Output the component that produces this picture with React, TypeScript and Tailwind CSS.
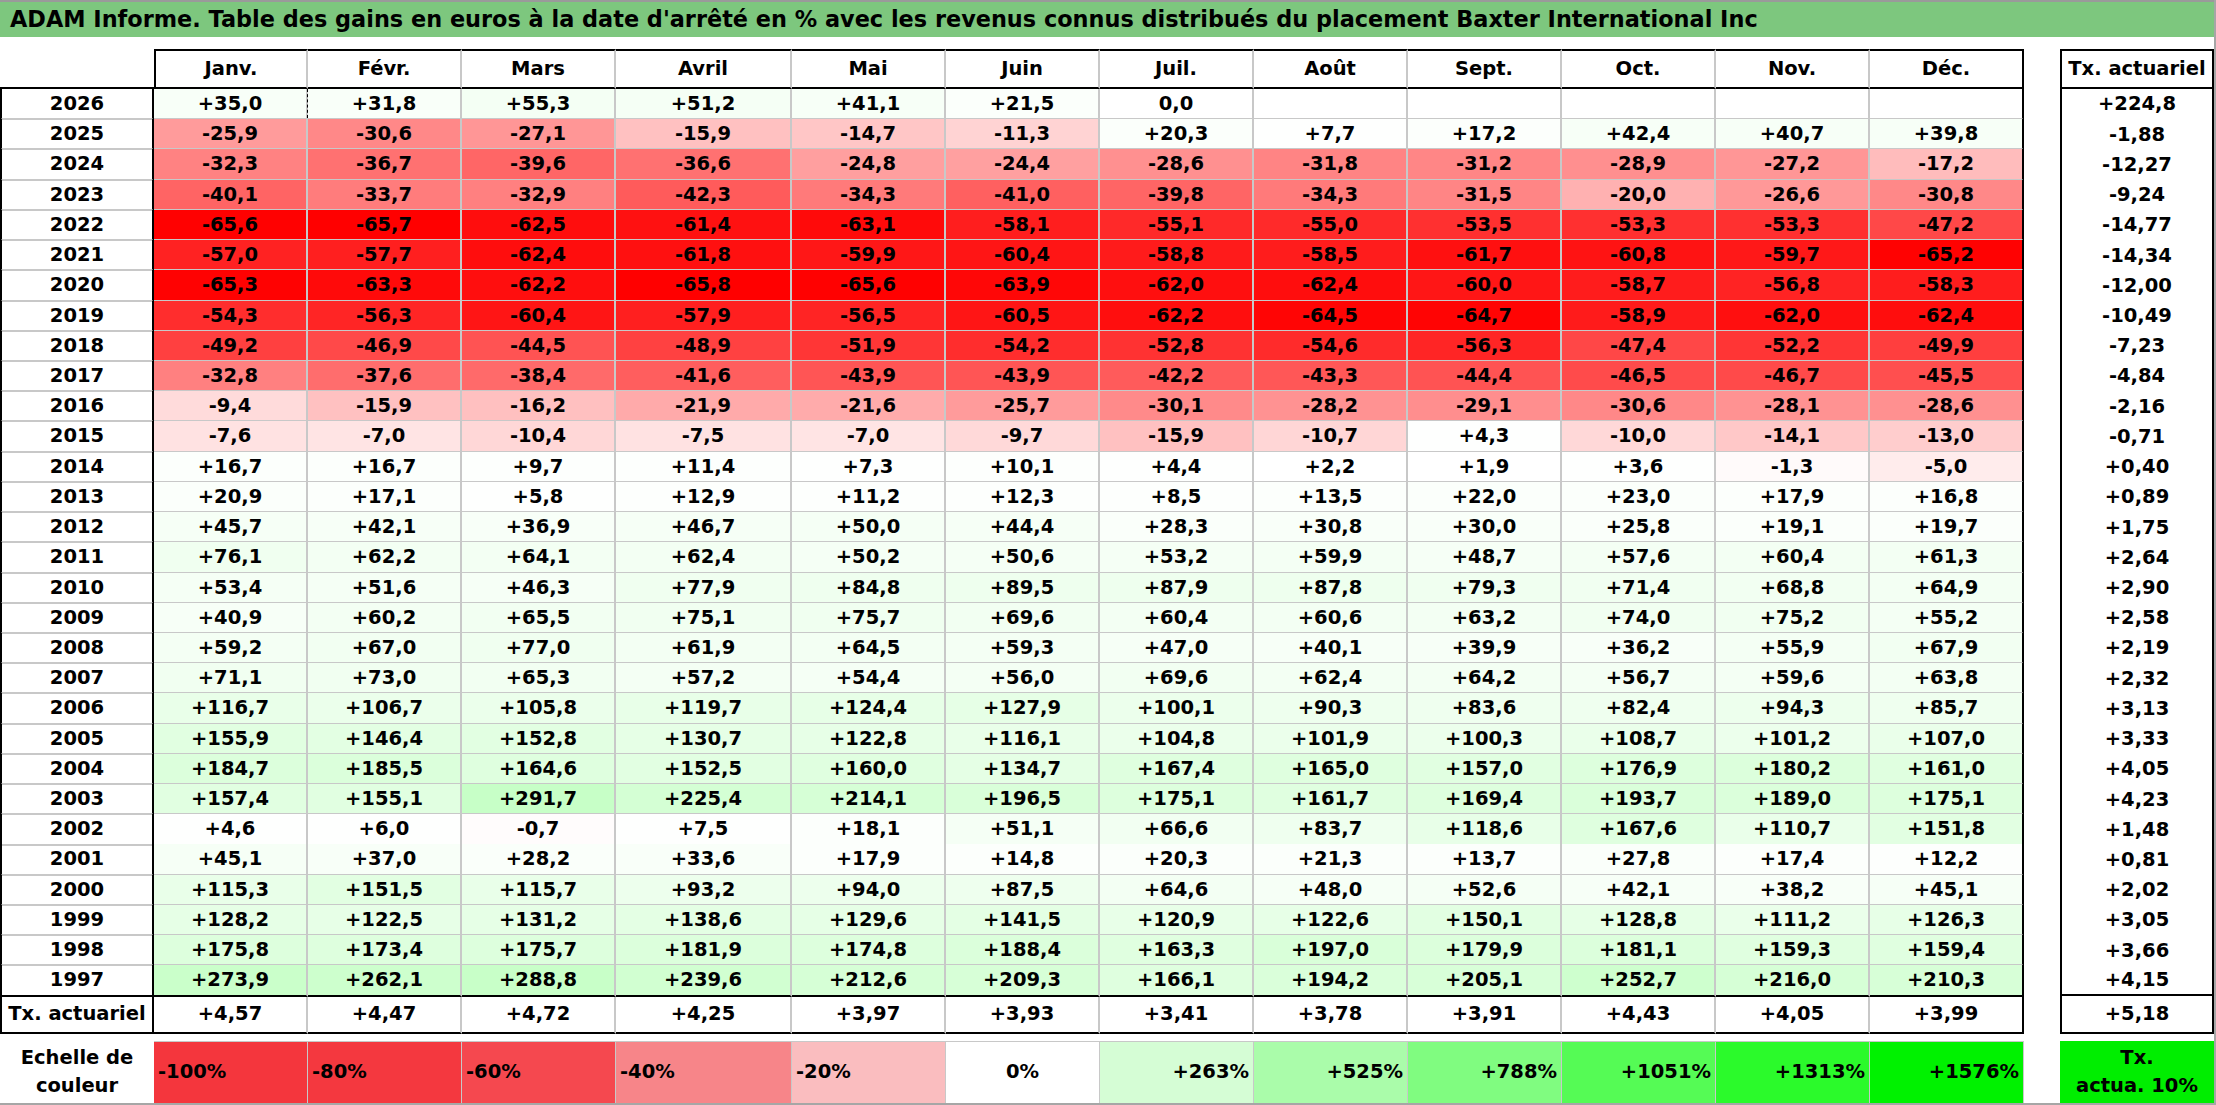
import React from "react";

const months = ["Janv.", "Févr.", "Mars", "Avril", "Mai", "Juin", "Juil.", "Août", "Sept.", "Oct.", "Nov.", "Déc."];

// année, 12 mois, taux actuariel
const rows: [string, string[], string][] = [
  ["2026", ["+35,0", "+31,8", "+55,3", "+51,2", "+41,1", "+21,5", "0,0", "", "", "", "", ""], "+224,8"],
  ["2025", ["-25,9", "-30,6", "-27,1", "-15,9", "-14,7", "-11,3", "+20,3", "+7,7", "+17,2", "+42,4", "+40,7", "+39,8"], "-1,88"],
  ["2024", ["-32,3", "-36,7", "-39,6", "-36,6", "-24,8", "-24,4", "-28,6", "-31,8", "-31,2", "-28,9", "-27,2", "-17,2"], "-12,27"],
  ["2023", ["-40,1", "-33,7", "-32,9", "-42,3", "-34,3", "-41,0", "-39,8", "-34,3", "-31,5", "-20,0", "-26,6", "-30,8"], "-9,24"],
  ["2022", ["-65,6", "-65,7", "-62,5", "-61,4", "-63,1", "-58,1", "-55,1", "-55,0", "-53,5", "-53,3", "-53,3", "-47,2"], "-14,77"],
  ["2021", ["-57,0", "-57,7", "-62,4", "-61,8", "-59,9", "-60,4", "-58,8", "-58,5", "-61,7", "-60,8", "-59,7", "-65,2"], "-14,34"],
  ["2020", ["-65,3", "-63,3", "-62,2", "-65,8", "-65,6", "-63,9", "-62,0", "-62,4", "-60,0", "-58,7", "-56,8", "-58,3"], "-12,00"],
  ["2019", ["-54,3", "-56,3", "-60,4", "-57,9", "-56,5", "-60,5", "-62,2", "-64,5", "-64,7", "-58,9", "-62,0", "-62,4"], "-10,49"],
  ["2018", ["-49,2", "-46,9", "-44,5", "-48,9", "-51,9", "-54,2", "-52,8", "-54,6", "-56,3", "-47,4", "-52,2", "-49,9"], "-7,23"],
  ["2017", ["-32,8", "-37,6", "-38,4", "-41,6", "-43,9", "-43,9", "-42,2", "-43,3", "-44,4", "-46,5", "-46,7", "-45,5"], "-4,84"],
  ["2016", ["-9,4", "-15,9", "-16,2", "-21,9", "-21,6", "-25,7", "-30,1", "-28,2", "-29,1", "-30,6", "-28,1", "-28,6"], "-2,16"],
  ["2015", ["-7,6", "-7,0", "-10,4", "-7,5", "-7,0", "-9,7", "-15,9", "-10,7", "+4,3", "-10,0", "-14,1", "-13,0"], "-0,71"],
  ["2014", ["+16,7", "+16,7", "+9,7", "+11,4", "+7,3", "+10,1", "+4,4", "+2,2", "+1,9", "+3,6", "-1,3", "-5,0"], "+0,40"],
  ["2013", ["+20,9", "+17,1", "+5,8", "+12,9", "+11,2", "+12,3", "+8,5", "+13,5", "+22,0", "+23,0", "+17,9", "+16,8"], "+0,89"],
  ["2012", ["+45,7", "+42,1", "+36,9", "+46,7", "+50,0", "+44,4", "+28,3", "+30,8", "+30,0", "+25,8", "+19,1", "+19,7"], "+1,75"],
  ["2011", ["+76,1", "+62,2", "+64,1", "+62,4", "+50,2", "+50,6", "+53,2", "+59,9", "+48,7", "+57,6", "+60,4", "+61,3"], "+2,64"],
  ["2010", ["+53,4", "+51,6", "+46,3", "+77,9", "+84,8", "+89,5", "+87,9", "+87,8", "+79,3", "+71,4", "+68,8", "+64,9"], "+2,90"],
  ["2009", ["+40,9", "+60,2", "+65,5", "+75,1", "+75,7", "+69,6", "+60,4", "+60,6", "+63,2", "+74,0", "+75,2", "+55,2"], "+2,58"],
  ["2008", ["+59,2", "+67,0", "+77,0", "+61,9", "+64,5", "+59,3", "+47,0", "+40,1", "+39,9", "+36,2", "+55,9", "+67,9"], "+2,19"],
  ["2007", ["+71,1", "+73,0", "+65,3", "+57,2", "+54,4", "+56,0", "+69,6", "+62,4", "+64,2", "+56,7", "+59,6", "+63,8"], "+2,32"],
  ["2006", ["+116,7", "+106,7", "+105,8", "+119,7", "+124,4", "+127,9", "+100,1", "+90,3", "+83,6", "+82,4", "+94,3", "+85,7"], "+3,13"],
  ["2005", ["+155,9", "+146,4", "+152,8", "+130,7", "+122,8", "+116,1", "+104,8", "+101,9", "+100,3", "+108,7", "+101,2", "+107,0"], "+3,33"],
  ["2004", ["+184,7", "+185,5", "+164,6", "+152,5", "+160,0", "+134,7", "+167,4", "+165,0", "+157,0", "+176,9", "+180,2", "+161,0"], "+4,05"],
  ["2003", ["+157,4", "+155,1", "+291,7", "+225,4", "+214,1", "+196,5", "+175,1", "+161,7", "+169,4", "+193,7", "+189,0", "+175,1"], "+4,23"],
  ["2002", ["+4,6", "+6,0", "-0,7", "+7,5", "+18,1", "+51,1", "+66,6", "+83,7", "+118,6", "+167,6", "+110,7", "+151,8"], "+1,48"],
  ["2001", ["+45,1", "+37,0", "+28,2", "+33,6", "+17,9", "+14,8", "+20,3", "+21,3", "+13,7", "+27,8", "+17,4", "+12,2"], "+0,81"],
  ["2000", ["+115,3", "+151,5", "+115,7", "+93,2", "+94,0", "+87,5", "+64,6", "+48,0", "+52,6", "+42,1", "+38,2", "+45,1"], "+2,02"],
  ["1999", ["+128,2", "+122,5", "+131,2", "+138,6", "+129,6", "+141,5", "+120,9", "+122,6", "+150,1", "+128,8", "+111,2", "+126,3"], "+3,05"],
  ["1998", ["+175,8", "+173,4", "+175,7", "+181,9", "+174,8", "+188,4", "+163,3", "+197,0", "+179,9", "+181,1", "+159,3", "+159,4"], "+3,66"],
  ["1997", ["+273,9", "+262,1", "+288,8", "+239,6", "+212,6", "+209,3", "+166,1", "+194,2", "+205,1", "+252,7", "+216,0", "+210,3"], "+4,15"],
];

const txMonths = ["+4,57", "+4,47", "+4,72", "+4,25", "+3,97", "+3,93", "+3,41", "+3,78", "+3,91", "+4,43", "+4,05", "+3,99"];

const legend: { label: string; bg: string; align: string }[] = [
  { label: "-100%", bg: "bg-[#f4363d]", align: "justify-start pl-[4px]" },
  { label: "-80%", bg: "bg-[#f4383f]", align: "justify-start pl-[4px]" },
  { label: "-60%", bg: "bg-[#f5484f]", align: "justify-start pl-[4px]" },
  { label: "-40%", bg: "bg-[#f78589]", align: "justify-start pl-[4px]" },
  { label: "-20%", bg: "bg-[#fabdbf]", align: "justify-start pl-[4px]" },
  { label: "0%", bg: "bg-white", align: "justify-center" },
  { label: "+263%", bg: "bg-[#d5fdd5]", align: "justify-end pr-[4px]" },
  { label: "+525%", bg: "bg-[#aafcaa]", align: "justify-end pr-[4px]" },
  { label: "+788%", bg: "bg-[#80fc80]", align: "justify-end pr-[4px]" },
  { label: "+1051%", bg: "bg-[#55fb55]", align: "justify-end pr-[4px]" },
  { label: "+1313%", bg: "bg-[#2bfa2b]", align: "justify-end pr-[4px]" },
  { label: "+1576%", bg: "bg-[#00f200]", align: "justify-end pr-[4px]" },
];

const cols = "grid grid-cols-[154px_154px_154px_154px_176px_154px_154px_154px_154px_154px_154px_154px_154px]";

function cellColor(s: string) {
  if (!s) return "#ffffff";
  const v = parseFloat(s.replace(",", "."));
  if (v < 0) {
    const t = Math.min(1, -v / 65.8);
    const g = Math.round(255 * (1 - t));
    return `rgb(255,${g},${g})`;
  }
  const t = Math.min(1, v / 291.7);
  const c = Math.round(255 - 56 * t);
  return `rgb(${c},255,${c})`;
}

export default function App() {
  return (
    <div className="w-[2216px] h-[1105px] overflow-hidden bg-white text-black font-['DejaVu_Sans',sans-serif] font-bold text-[19.5px] border-r-2 border-[#a6a6a6]">
      {/* TITRE */}
      <div className="h-[37px] bg-[#7dc77e] border-t-2 border-[#9a9a9a] flex items-center pl-[10px] text-[22.4px] whitespace-nowrap">
        ADAM Informe. Table des gains en euros à la date d'arrêté en % avec les revenus connus distribués du placement Baxter International Inc
      </div>

      <div className="flex gap-[36px] mt-[12px]">
        {/* TABLE PRINCIPALE */}
        <div className="w-[2024px]">
          <div className={`${cols} h-[40px]`}>
            <div className="border-b-2 border-black" />
            {months.map((m, i) => (
              <div
                key={m}
                className={`flex items-center justify-center border-t-2 border-b-2 border-t-black border-b-black ${
                  i === 0 ? "border-l-2 border-l-black" : ""
                } ${i === 11 ? "border-r-2 border-r-black" : "border-r-2 border-r-[#c8c8c8]"}`}
              >
                {m}
              </div>
            ))}
          </div>

          {rows.map(([year, vals], r) => (
            <div key={year} className={`${cols} h-[30.23px]`}>
              <div
                className={`flex items-center justify-center border-l-2 border-r-2 border-l-black border-r-black border-b-2 ${
                  r === rows.length - 1 ? "border-b-black" : "border-b-[#c8c8c8]"
                }`}
              >
                {year}
              </div>
              {vals.map((v, i) => (
                <div
                  key={i}
                  style={{ backgroundColor: cellColor(v) }}
                  className={`relative flex items-center justify-center border-b-2 ${
                    r === rows.length - 1 ? "border-b-black" : "border-b-[#c8c8c8]"
                  } ${i === 11 ? "border-r-2 border-r-black" : "border-r-2 border-r-[#c8c8c8]"}`}
                >
                  {v}
                  {r === 0 && i === 0 && (
                    <div className="absolute right-[-2px] top-0 bottom-0 border-l border-dashed border-black" />
                  )}
                </div>
              ))}
            </div>
          ))}

          <div className={`${cols} h-[38px]`}>
            <div className="flex items-center justify-center border-l-2 border-r-2 border-b-2 border-black">Tx. actuariel</div>
            {txMonths.map((v, i) => (
              <div
                key={i}
                className={`flex items-center justify-center border-b-2 border-b-black ${
                  i === 11 ? "border-r-2 border-r-black" : "border-r-2 border-r-[#c8c8c8]"
                }`}
              >
                {v}
              </div>
            ))}
          </div>
        </div>

        {/* COLONNE TX ACTUARIEL */}
        <div className="w-[154px] border-l-2 border-r-2 border-black">
          <div className="h-[40px] flex items-center justify-center border-t-2 border-b-2 border-black whitespace-nowrap">
            Tx. actuariel
          </div>
          {rows.map(([year, , tx], r) => (
            <div
              key={year}
              className={`h-[30.23px] flex items-center justify-center ${r === rows.length - 1 ? "border-b-2 border-black" : ""}`}
            >
              {tx}
            </div>
          ))}
          <div className="h-[38px] flex items-center justify-center border-b-2 border-black">+5,18</div>
        </div>
      </div>

      {/* ECHELLE DE COULEUR */}
      <div className="flex gap-[36px] mt-[7px] border-b-2 border-[#a6a6a6]">
        <div className={`${cols} w-[2024px] h-[62px]`}>
          <div className="flex flex-col items-center justify-center leading-[28px]">
            <span>Echelle de</span>
            <span>couleur</span>
          </div>
          {legend.map((l) => (
            <div key={l.label} className={`flex items-center ${l.align} ${l.bg} border-t border-r border-[#c8c8c8]`}>
              {l.label}
            </div>
          ))}
        </div>
        <div className="w-[154px] h-[62px] bg-[#00ee00] flex flex-col items-center justify-center leading-[28px]">
          <span>Tx.</span>
          <span>actua. 10%</span>
        </div>
      </div>
    </div>
  );
}
